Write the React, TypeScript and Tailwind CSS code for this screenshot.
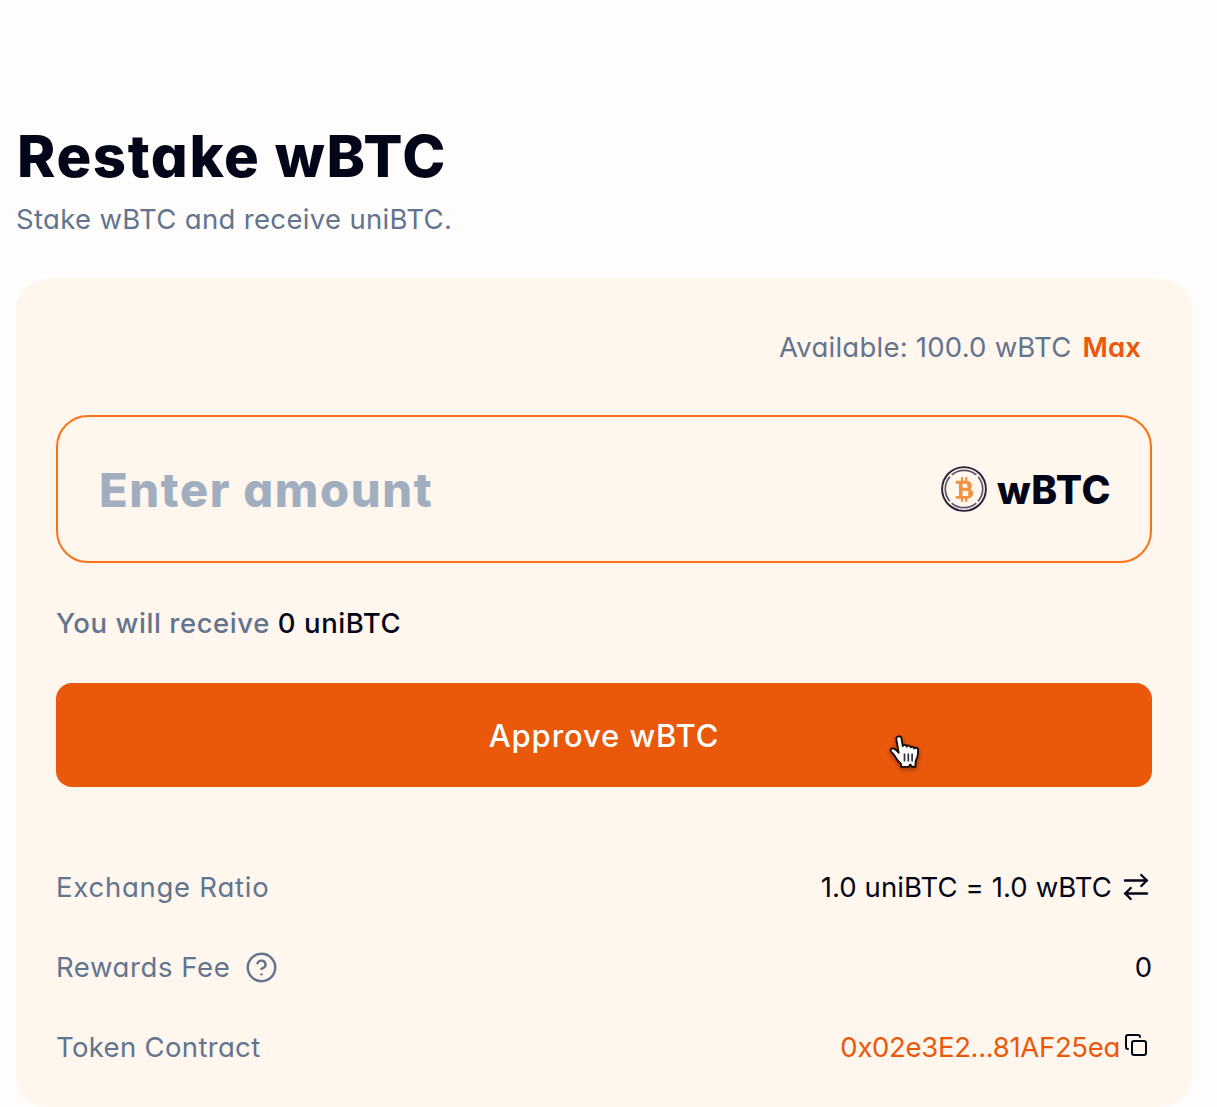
import type { ReactNode } from "react";
import { CircleQuestionMark, Copy } from "lucide-react";

function WbtcCoin() {
  return (
    <svg width="48" height="48" viewBox="0 0 48 48" fill="none" className="shrink-0">
      <circle cx="24" cy="24" r="21.9" stroke="#2a2038" strokeWidth="1.9" />
      <circle
        cx="24"
        cy="24"
        r="18.7"
        stroke="#5d5668"
        strokeWidth="1.7"
        pathLength="360"
        strokeDasharray="82 8"
        transform="rotate(-41 24 24)"
      />
      <g stroke="#f09242">
        <path d="M22 12.2V16M26.2 12.2V16M22 32.5v4.2M26.2 32.5v4.2" strokeWidth="2.2" />
        <path d="M15.8 17.3h9.8c6.4 0 6.4 6.9 0 6.9h-4M25.6 24.4c8.2 0 8.2 8 0 8h-9.8" strokeWidth="2.9" />
        <path d="M20.8 17v15.4M29 19v3M30 26.5v4" strokeWidth="3.6" />
      </g>
    </svg>
  );
}

function SwapIcon() {
  return (
    <svg
      width="28"
      height="32"
      viewBox="0 0 28 32"
      fill="none"
      stroke="currentColor"
      strokeWidth="2.4"
      strokeLinecap="round"
      strokeLinejoin="round"
      className="shrink-0"
    >
      <path d="M3 9.5h22M19.3 4l5.5 5.5-5.5 5.5M25 22.5H3M8.7 17l-5.5 5.5 5.5 5.5" />
    </svg>
  );
}

function HandCursor() {
  return (
    <svg
      width="36"
      height="40"
      viewBox="0 0 36 40"
      className="pointer-events-none absolute top-[50px] left-[830px] drop-shadow-[0_2px_2px_rgba(0,0,0,0.35)]"
    >
      <path
        d="M10.3 6.2c-.6-3.4 4.6-4 5.2-.8l1.3 7.8c.3-2 3.4-2 3.9.4.6-1.6 3.6-1.4 4 .8.8-1.3 3.2-.9 3.5 1.2 1-1.6 3.9-1 3.9 1.3 0 4.3-.2 6.400-1.500 8.900-1 2-1.300 3.200-1.100 6.200l.1 1.800h-3.800l-1.500-2.300-1.600 2.400h-7.500l-.3-3.200c-2.300-1.900-4.500-4.700-6-7.500-1.200-2.300-3.600-3.800-4.100-5.200-.7-2 1.200-3.300 3.200-2.300 1.900.9 3.200 2.400 4.700 4.100z"
        fill="#fff"
        stroke="#1a0d06"
        strokeWidth="1.9"
        strokeLinejoin="round"
      />
      <path d="M18.5 20.5v8M22.3 20.5v8M26.1 20.5v8" stroke="#333" strokeWidth="1.7" />
    </svg>
  );
}

function Row({ label, children }: { label: ReactNode; children: ReactNode }) {
  return (
    <div className="flex h-10 items-center justify-between">
      <div className="flex items-center text-slate-500">{label}</div>
      <div className="flex items-center">{children}</div>
    </div>
  );
}

export default function App() {
  return (
    <main className="h-[1107px] overflow-hidden bg-[#fffdfc] pt-[120px] pr-[25px] pl-4 font-['Inter',sans-serif] text-[27.5px] leading-10 font-[440] whitespace-nowrap text-slate-950 [font-feature-settings:'cv11']">
      <h1 className="pl-px text-[58px] leading-[72px] font-[760] tracking-[1.6px]">Restake wBTC</h1>
      <p className="mt-[7px] tracking-[0.33px] text-slate-500">Stake wBTC and receive uniBTC.</p>

      <section className="mt-10 rounded-[32px] bg-[#fff6ed] px-10 pt-12 pb-10">
        <div className="flex justify-end gap-[11px] pr-[11px]">
          <span className="tracking-[0.23px] text-slate-500">Available: 100.0 wBTC</span>
          <button className="font-semibold tracking-[0.1px] text-[#ea580c]">Max</button>
        </div>

        <div className="mt-12 flex h-[148px] items-center rounded-[32px] border-2 border-[#f97316] pr-[39px] pl-[41px]">
          <input
            placeholder="Enter amount"
            className="h-16 min-w-0 flex-1 bg-transparent text-[47px] leading-[62px] font-[760] tracking-[1.65px] outline-none placeholder:text-[#a0aec0]"
          />
          <WbtcCoin />
          <span className="ml-[9px] pt-0.5 text-[39px] font-[780] tracking-[0.6px]">wBTC</span>
        </div>

        <p className="mt-10 font-medium tracking-[0.57px] text-slate-500">
          You will receive <span className="text-slate-950">0 uniBTC</span>
        </p>

        <div className="relative mt-10">
          <button className="h-[104px] w-full rounded-2xl bg-[#ea580c] pt-0.5 text-[31px] font-medium tracking-[0.9px] text-white">
            Approve wBTC
          </button>
          <HandCursor />
        </div>

        <div className="mt-20 flex flex-col gap-10">
          <Row label={<span className="tracking-[0.75px]">Exchange Ratio</span>}>
            <span className="mr-2.5 tracking-[0.1px]">1.0 uniBTC = 1.0 wBTC</span>
            <span className="mr-0.5">
              <SwapIcon />
            </span>
          </Row>
          <Row
            label={
              <>
                <span className="mr-[15px] tracking-[0.58px]">Rewards Fee</span>
                <CircleQuestionMark size={33} strokeWidth={1.75} />
              </>
            }
          >
            <span>0</span>
          </Row>
          <Row label={<span className="tracking-[0.33px]">Token Contract</span>}>
            <span className="mr-1 tracking-[-0.32px] text-[#ea580c]">0x02e3E2...81AF25ea</span>
            <Copy size={24} strokeWidth={2} className="mr-1 mb-1" />
          </Row>
        </div>
      </section>
    </main>
  );
}
